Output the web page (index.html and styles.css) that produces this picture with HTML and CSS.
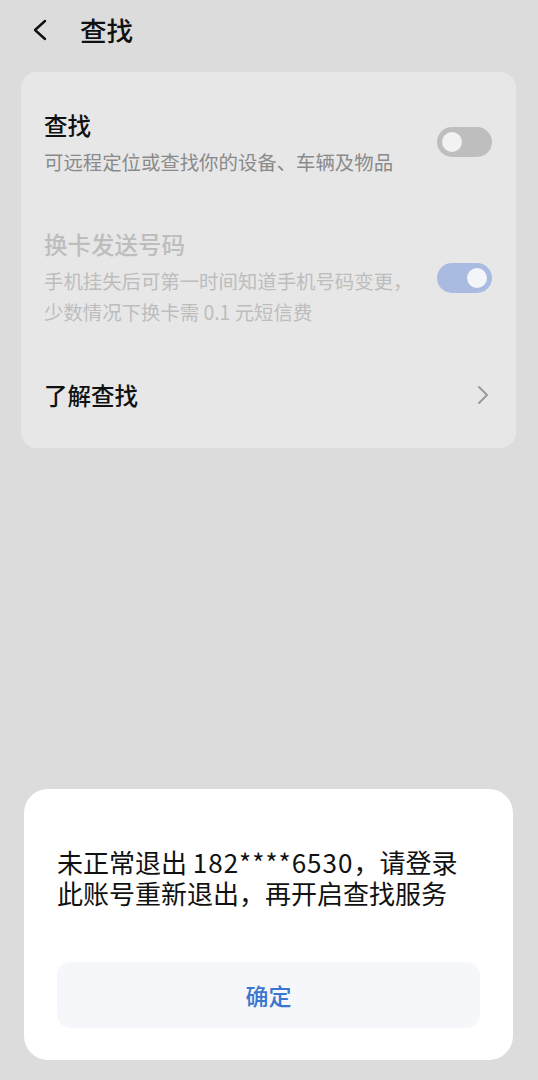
FILE: index.html
```html
<!DOCTYPE html>
<html lang="zh-CN">
<head>
<meta charset="UTF-8">
<meta name="viewport" content="width=device-width, initial-scale=1.0">
<title>查找</title>
<link rel="stylesheet" href="styles.css">
</head>
<body>

<header class="topbar">
  <svg class="back" width="16" height="22" viewBox="0 0 16 22">
    <path d="M13 2 L3 11 L13 20" fill="none" stroke="#111" stroke-width="2.4" stroke-linecap="round" stroke-linejoin="round"/>
  </svg>
  <h1 class="page-title">查找</h1>
</header>

<section class="card">
  <div class="row row-find">
    <div class="row-text">
      <div class="row-title">查找</div>
      <div class="row-sub">可远程定位或查找你的设备、车辆及物品</div>
    </div>
    <span class="switch"><span class="knob"></span></span>
  </div>

  <div class="row row-sim disabled">
    <div class="row-text">
      <div class="row-title">换卡发送号码</div>
      <div class="row-sub">手机挂失后可第一时间知道手机号码变更，</div>
      <div class="row-sub next">少数情况下换卡需 0.1 元短信费</div>
    </div>
    <span class="switch on"><span class="knob"></span></span>
  </div>

  <div class="row row-link">
    <div class="row-title">了解查找</div>
    <svg class="arrow" width="12" height="20" viewBox="0 0 12 20">
      <path d="M2 2 L10 10 L2 18" fill="none" stroke="#9a9a9a" stroke-width="2" stroke-linecap="round" stroke-linejoin="round"/>
    </svg>
  </div>
</section>

<div class="dialog">
  <div class="dialog-msg">未正常退出 <span class="num">182****6530</span>，请登录</div>
  <div class="dialog-msg">此账号重新退出，再开启查找服务</div>
  <button class="dialog-btn" type="button">确定</button>
</div>

</body>
</html>
```

FILE: styles.css
```css
body {
  margin: 0;
  height: 1080px;
  background-color: #dcdcdc;
  font-family: "Noto Sans CJK SC", "Noto Sans", sans-serif;
  color: #111;
}
.topbar {
  display: flex;
  align-items: center;
  height: 60px;
  padding-left: 32px;
}
.back {
  display: block;
  margin-right: 32px;
}
.page-title {
  margin: 0;
  font-size: 26.5px;
  font-weight: 500;
  line-height: 32px;
}
.card {
  margin: 12px 22px 0 21px;
  padding: 16px 23px 8px 23px;
  background-color: #e7e7e7;
  border-radius: 16px;
}
.row {
  display: flex;
  align-items: center;
  justify-content: space-between;
}
.row-find {
  padding: 22px 0 27px;
}
.row-sim {
  padding: 25px 0 27px;
}
.row-link {
  padding: 26px 4px 30px 0;
}
.row-title {
  font-size: 23.5px;
  font-weight: 500;
  line-height: 30px;
  height: 30px;
}
.row-sub {
  margin-top: 6px;
  font-size: 19.4px;
  line-height: 31px;
  height: 31px;
  color: #8a8a8a;
}
.row-sub.next {
  margin-top: 0;
}
.disabled .row-title,
.disabled .row-sub {
  color: #bdbdbd;
}
.switch {
  position: relative;
  flex-shrink: 0;
  width: 55px;
  height: 30px;
  margin-right: 1px;
  border-radius: 15px;
  background-color: #bebebe;
}
.row-find .switch {
  margin-bottom: 3px;
}
.knob {
  position: absolute;
  top: 5px;
  left: 5px;
  width: 20px;
  height: 20px;
  border-radius: 50%;
  background-color: #f2f2f2;
}
.switch.on {
  background-color: #aabbe2;
}
.switch.on .knob {
  left: 30px;
  background-color: #f4f5f8;
}
.dialog {
  position: fixed;
  left: 24px;
  right: 25px;
  bottom: 20px;
  padding: 57px 33px 32px;
  background-color: #fff;
  border-radius: 24px;
}
.dialog-msg {
  height: 31px;
  font-size: 26px;
  line-height: 31px;
  color: #111;
  white-space: nowrap;
}
.num {
  letter-spacing: 1px;
}
.dialog-btn {
  display: block;
  width: 100%;
  height: 66px;
  margin-top: 54px;
  border: none;
  border-radius: 14px;
  background-color: #f5f7fa;
  font-family: "Noto Sans CJK SC", sans-serif;
  font-size: 23px;
  font-weight: 500;
  color: #3a76cf;
}
```
